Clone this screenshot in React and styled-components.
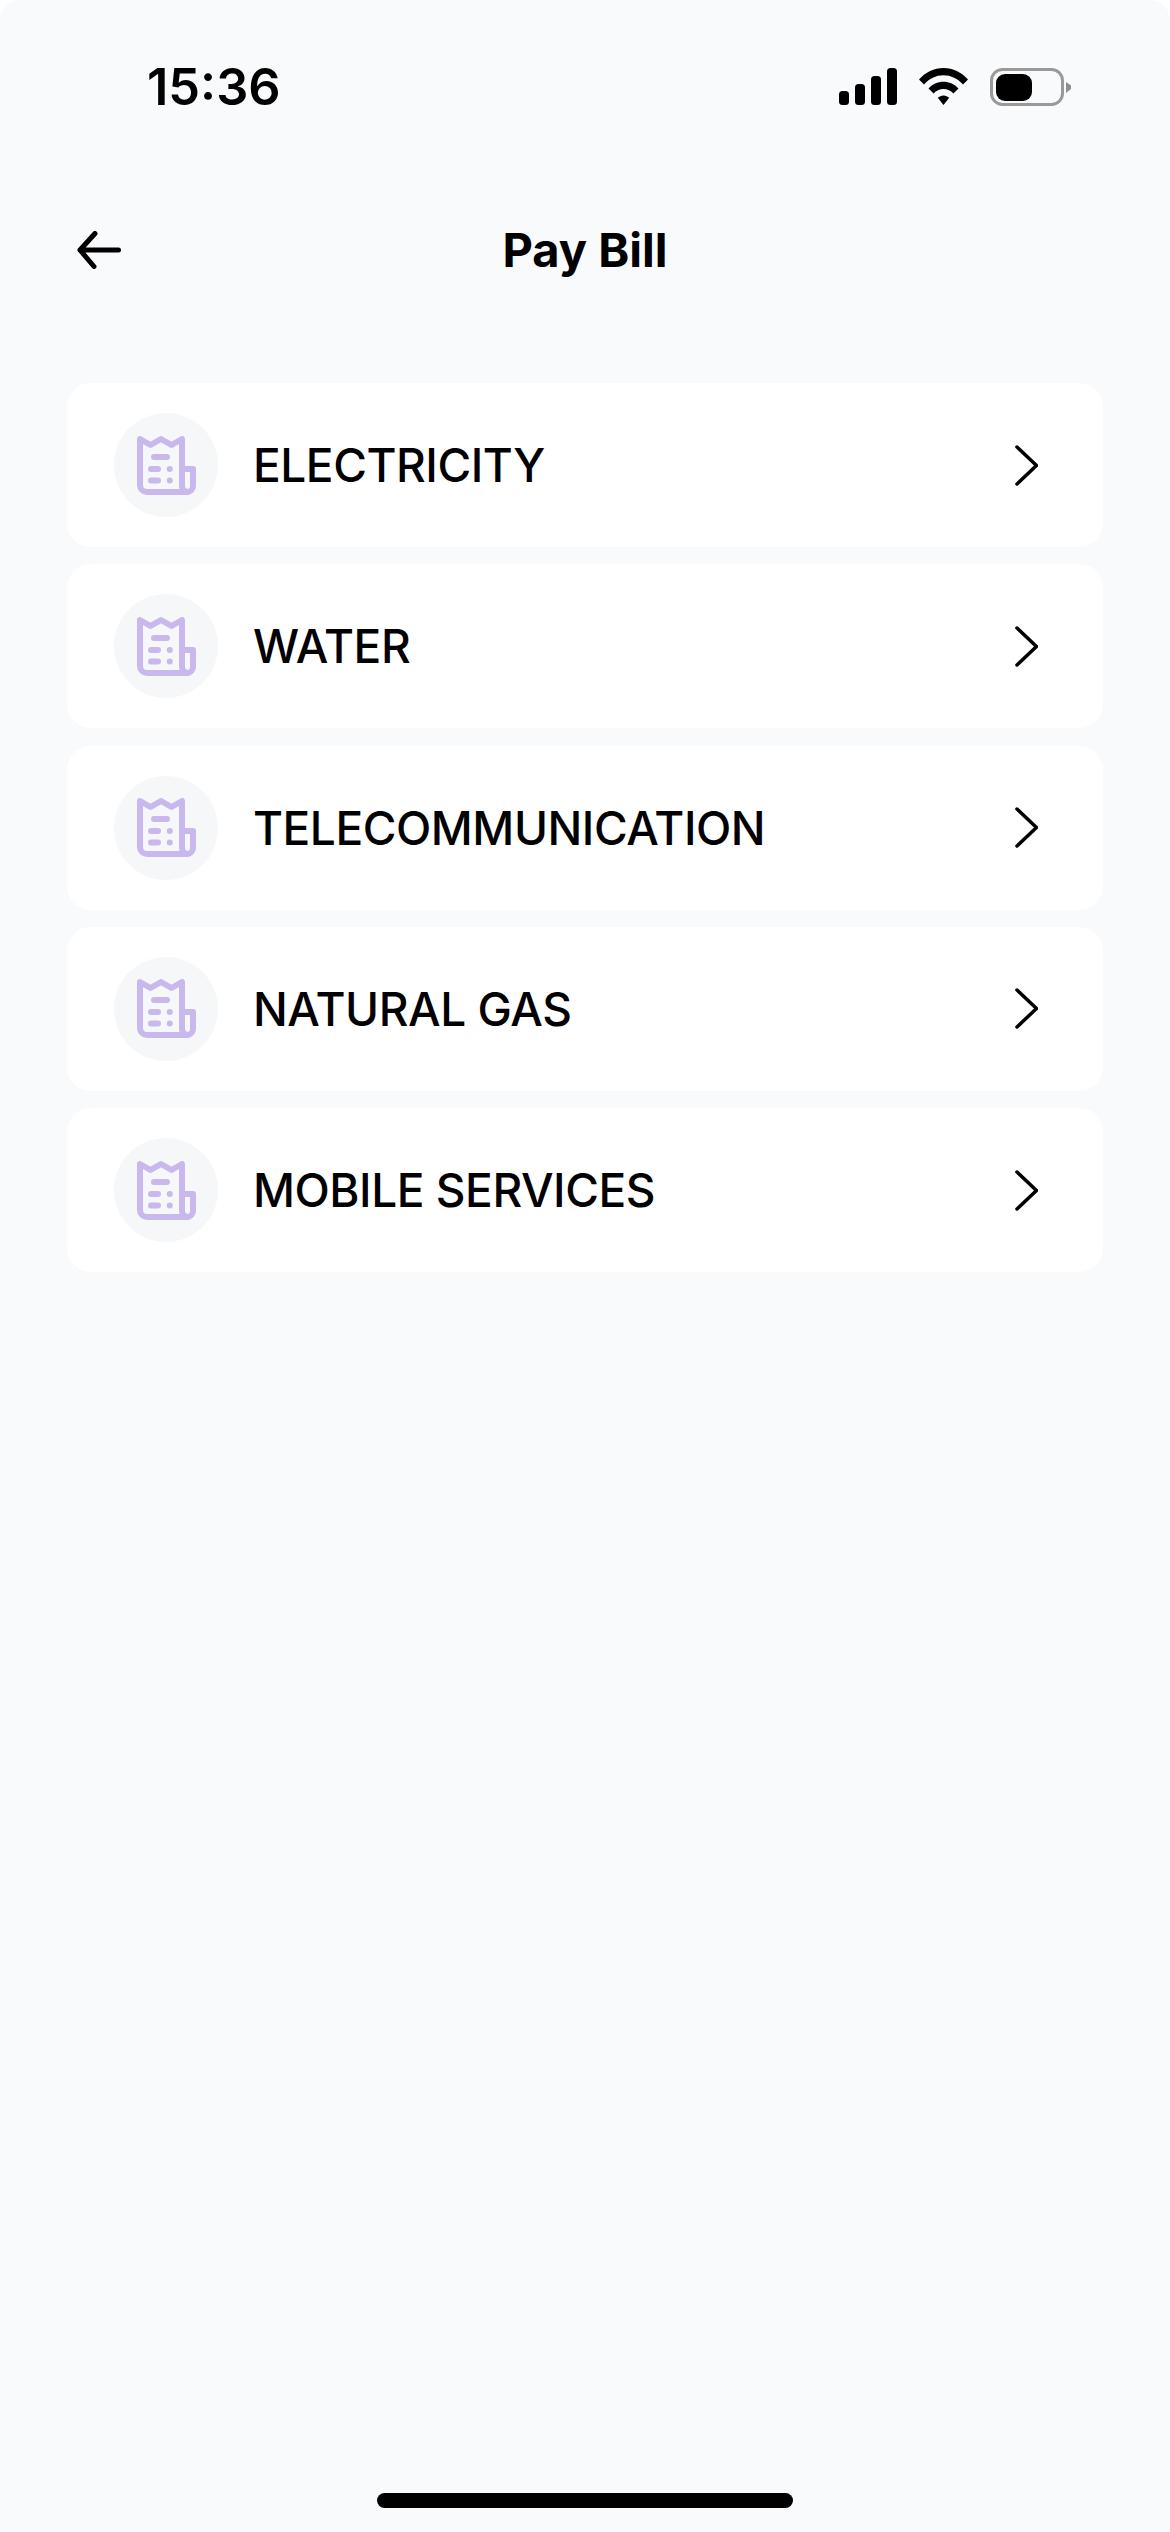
import React from 'react';
import styled, { createGlobalStyle } from 'styled-components';

const GlobalStyle = createGlobalStyle`
    html, body {
        margin: 0;
        padding: 0;
        background: #ffffff;
    }
`;

const Screen = styled.div`
    width: 1170px;
    height: 2532px;
    box-sizing: border-box;
    display: flex;
    flex-direction: column;
    background: #f9fafc;
    border-radius: 20px 20px 0 0;
    font-family: Inter, "Liberation Sans", sans-serif;
    color: #000000;
    overflow: hidden;
`;

const StatusBar = styled.div`
    height: 87px;
    padding: 43px 98px 0 147px;
    display: flex;
    justify-content: space-between;
    align-items: center;
    box-sizing: content-box;
`;

const Time = styled.div`
    font-size: 50.500px;
    font-weight: 600;
    line-height: 56px;
`;

const StatusIcons = styled.div`
    display: flex;
    align-items: center;
    gap: 22px;
`;

const Header = styled.div`
    height: 64px;
    margin-top: 88px;
    padding: 0 77px;
    display: grid;
    grid-template-columns: 44px 1fr 44px;
    align-items: center;
`;

const Title = styled.h1`
    margin: 0;
    font-size: 47px;
    font-weight: 700;
    line-height: 64px;
    text-align: center;
`;

const List = styled.div`
    margin: 101px 67px 0;
    display: flex;
    flex-direction: column;
    gap: 17.250px;
`;

const Row = styled.div`
    height: 164px;
    padding: 0 65px 0 47px;
    display: flex;
    align-items: center;
    background: #ffffff;
    border-radius: 24px;
`;

const IconCircle = styled.div`
    width: 104px;
    height: 104px;
    flex: none;
    display: flex;
    align-items: center;
    justify-content: center;
    border-radius: 50%;
    background: #f6f7f9;
`;

const Label = styled.span`
    flex: 1;
    margin-left: 35px;
    font-size: 46px;
    font-weight: 450;
    letter-spacing: -0.450px;
    line-height: 56px;
`;

const HomeBar = styled.div`
    width: 416px;
    height: 15px;
    margin: auto auto 24px;
    border-radius: 8px;
    background: #000000;
`;

const SignalIcon = () => (
    <svg width="58" height="37" viewBox="0 0 58 37" fill="#000">
        <rect x="0" y="23" width="10" height="14" rx="3.5" />
        <rect x="16" y="16" width="10" height="21" rx="3.5" />
        <rect x="32" y="8" width="10" height="29" rx="3.5" />
        <rect x="48" y="0" width="10" height="37" rx="3.5" />
    </svg>
);

const WifiIcon = () => (
    <svg width="49" height="37" viewBox="0 0 49 37" fill="#000">
        <path d="M0 11.5C6.5 4.2 15 0 24.5 0S42.500 4.200 49 11.500L44 16.500C38.800 10.700 32 7.300 24.500 7.300S10.200 10.700 5 16.500Z" />
        <path d="M9.500 20.500C13.400 16.200 18.700 13.800 24.500 13.800S35.600 16.200 39.500 20.500L34.400 25.600C31.800 22.800 28.300 21.100 24.500 21.100S17.200 22.800 14.600 25.600Z" />
        <path d="M18.800 29.800C20.300 28.300 22.300 27.400 24.500 27.400S28.700 28.300 30.200 29.800L24.500 37Z" />
    </svg>
);

const BatteryIcon = () => (
    <svg width="82" height="38" viewBox="0 0 82 38">
        <rect x="1.500" y="1.500" width="71" height="35" rx="11" fill="none" stroke="#999999" strokeWidth="3" />
        <rect x="6" y="6" width="36" height="27" rx="9" fill="#000" />
        <path d="M76 14L81 17.500V21L76 25Z" fill="#8e8e8e" />
    </svg>
);

const BackArrow = () => (
    <svg width="44" height="38" viewBox="0 0 44 38" fill="none" stroke="#000" strokeWidth="5" strokeLinecap="round" strokeLinejoin="round">
        <path d="M41.500 19H3M18 2.500L3 19L17 35.500" />
    </svg>
);

const Chevron = () => (
    <svg width="23" height="41" viewBox="0 0 23 41" fill="none" stroke="#000" strokeWidth="3.500" strokeLinecap="round" strokeLinejoin="round">
        <path d="M2 2L21.500 20.500L2 39" />
    </svg>
);

const ReceiptIcon = () => (
    <svg width="59" height="59" viewBox="0 0 59 59" fill="none" stroke="#c9b8ee" strokeWidth="6" strokeLinecap="round" strokeLinejoin="round">
        <path d="M3 3L13.500 9L24 3L34.500 9L45 3V50A6 6 0 0 0 50 56H10A7 7 0 0 1 3 49Z" />
        <path d="M45 33H56V50A6 6 0 0 1 50 56" />
        <path d="M17 21H30M14 33H21M14 44.500H21" />
        <path d="M32.700 33H32.800M32.700 44.500H32.800" />
    </svg>
);

const categories = ['ELECTRICITY', 'WATER', 'TELECOMMUNICATION', 'NATURAL GAS', 'MOBILE SERVICES'];

const App = () => {
    return (
        <Screen>
            <GlobalStyle />
            <StatusBar>
                <Time>15:36</Time>
                <StatusIcons>
                    <SignalIcon />
                    <WifiIcon />
                    <BatteryIcon />
                </StatusIcons>
            </StatusBar>
            <Header>
                <BackArrow />
                <Title>Pay Bill</Title>
            </Header>
            <List>
                {categories.map((name) => (
                    <Row key={name}>
                        <IconCircle>
                            <ReceiptIcon />
                        </IconCircle>
                        <Label>{name}</Label>
                        <Chevron />
                    </Row>
                ))}
            </List>
            <HomeBar />
        </Screen>
    );
};

export default App;
